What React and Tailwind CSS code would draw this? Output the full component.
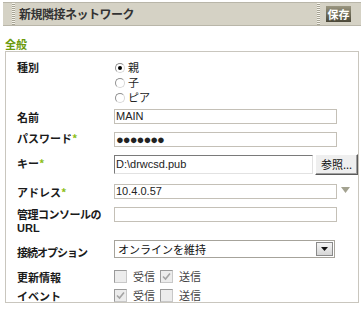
import React from 'react';

const font = { fontFamily: '"Noto Sans CJK JP", "Liberation Sans", sans-serif' };

const Star = () => <span className="text-[#8cbf1a]">*</span>;

const Grip = () => (
  <div className="w-[3px] self-stretch bg-[repeating-linear-gradient(to_bottom,#f6f4ec_0px,#f6f4ec_1px,#a5a293_1px,#a5a293_2px)]" />
);

const Radio = ({ checked, label }) => (
  <div className="flex items-center h-[15px]">
    <span className="w-[10px] h-[10px] rounded-full bg-white border border-t-[#8f8f8f] border-l-[#8f8f8f] border-r-[#d8d8d8] border-b-[#d8d8d8] flex items-center justify-center">
      {checked && <span className="w-[4px] h-[4px] rounded-full bg-black" />}
    </span>
    <span className="ml-[3px] text-[11px] leading-[15px] text-[#222]">{label}</span>
  </div>
);

const Check = ({ checked, label }) => (
  <div className="flex items-center">
    <span className="w-[13px] h-[13px] bg-[#ececec] border border-t-[#9a9a9a] border-l-[#9a9a9a] border-r-[#c8c8c8] border-b-[#c8c8c8] flex items-center justify-center">
      {checked && (
        <svg width="9" height="9" viewBox="0 0 9 9">
          <path d="M1 4.5 L3.5 7 L8 1.5" fill="none" stroke="#a3a3a3" strokeWidth="1.6" />
        </svg>
      )}
    </span>
    <span className="ml-[6px] text-[11px] leading-[13px] text-[#444]">{label}</span>
  </div>
);

const Row = ({ label, rowClass, labelClass, children }) => (
  <div className={`flex ${rowClass}`}>
    <div className={`w-[97px] shrink-0 text-[11px] leading-[13px] font-bold text-[#1a1a1a] ${labelClass}`}>{label}</div>
    <div className="flex items-start">{children}</div>
  </div>
);

const TextBox = ({ value, w }) => (
  <div className={`h-[15px] ${w} border border-[#c4c0b7] bg-white pl-[1px] flex items-center text-[11px] text-[#222]`} style={{ fontFamily: '"Liberation Sans", sans-serif' }}>
    {value}
  </div>
);

const App = () => {
  return (
    <div className="w-[364px] h-[311px] bg-white overflow-hidden" style={font}>
      {/* Header */}
      <div className="pt-[2px]">
        <div className="ml-[3px] w-[358px] h-[24px] flex items-center bg-[#d5d2c5] border-y border-[#b9b6a9]">
          <div className="ml-[9px] self-stretch flex"><Grip /></div>
          <div className="ml-[4px] text-[12px] leading-[16px] font-bold tracking-[-0.5px] text-[#333]">新規隣接ネットワーク</div>
          <div className="flex-1" />
          <div className="self-stretch flex"><Grip /></div>
          <div className="ml-[6px] mr-[10px] w-[25px] h-[16px] bg-linear-to-b from-[#9a9680] to-[#4b4838] flex items-center justify-center text-[11px] font-bold text-white leading-none">
            保存
          </div>
        </div>
      </div>

      {/* Section title */}
      <div className="ml-[5px] mt-[12px] text-[11px] leading-[13px] font-bold text-[#6b9a0c]">全般</div>

      {/* Fieldset */}
      <div className="ml-[5px] w-[354px] border border-[#c9c6be] pt-[9px] pl-[11px]">
        <Row label="種別" rowClass="h-[48px]" labelClass="pt-0">
          <div className="ml-[1px] -mt-[1px]">
            <Radio checked label="親" />
            <Radio label="子" />
            <Radio label="ピア" />
          </div>
        </Row>

        <Row label="名前" rowClass="h-[23px]" labelClass="pt-[2px]">
          <TextBox value="MAIN" w="w-[223px]" />
        </Row>

        <Row label={<>パスワード<Star /></>} rowClass="h-[22px]" labelClass="pt-0">
          <TextBox value={<span className="text-[13px] tracking-[-1px] leading-none">●●●●●●●</span>} w="w-[223px]" />
        </Row>

        <Row label={<>キー<Star /></>} rowClass="h-[30px]" labelClass="pt-[3px]">
          <div className="mt-[1px] h-[19px] w-[199px] bg-white border border-t-[#7a7a7a] border-l-[#7a7a7a] border-r-[#e2e2e2] border-b-[#e2e2e2] pl-[1px] flex items-center text-[11px] text-[#222]" style={{ fontFamily: '"Liberation Sans", sans-serif' }}>
            D:\drwcsd.pub
          </div>
          <div className="ml-[2px] h-[21px] w-[43px] bg-[#efefef] border border-t-white border-l-white border-r-[#5a5a5a] border-b-[#5a5a5a] shadow-[inset_-1px_-1px_0_#a0a0a0] flex items-center justify-center text-[11px] text-[#111]">
            参照...
          </div>
        </Row>

        <Row label={<>アドレス<Star /></>} rowClass="h-[23px]" labelClass="pt-[2px]">
          <TextBox value="10.4.0.57" w="w-[223px]" />
          <svg className="ml-[4px] mt-[3px]" width="9" height="6" viewBox="0 0 9 6">
            <polygon points="0,0 9,0 4.5,6" fill="#a3a290" />
          </svg>
        </Row>

        <Row
          label={
            <>
              <div className="h-[13px] tracking-[-0.5px]">管理コンソールの</div>
              <div className="h-[13px] mt-[1px]" style={{ fontFamily: '"Liberation Sans", sans-serif' }}>URL</div>
            </>
          }
          rowClass="h-[33px]"
          labelClass="pt-[1px]"
        >
          <TextBox value="" w="w-[223px]" />
        </Row>

        <Row label="接続オプション" rowClass="h-[30px]" labelClass="pt-[6px] tracking-[-1px]">
          <div className="h-[18px] w-[221px] bg-white border border-[#a6a39b] flex items-center">
            <span className="flex-1 pl-[3px] text-[11px] text-[#111]">オンラインを維持</span>
            <span className="mr-[1px] w-[17px] h-[14px] border border-[#8a8a8a] bg-linear-to-b from-[#f4f4f4] to-[#d6d6d6] flex items-center justify-center">
              <svg width="7" height="4" viewBox="0 0 7 4">
                <polygon points="0,0 7,0 3.5,4" fill="#111" />
              </svg>
            </span>
          </div>
        </Row>

        <Row label="更新情報" rowClass="h-[19px]" labelClass="pt-[1px]">
          <Check label="受信" />
          <div className="ml-[5px]"><Check checked label="送信" /></div>
        </Row>

        <Row label="イベント" rowClass="h-[13px]" labelClass="pt-[1px]">
          <Check checked label="受信" />
          <div className="ml-[5px]"><Check label="送信" /></div>
        </Row>
      </div>
    </div>
  );
};

export default App;
